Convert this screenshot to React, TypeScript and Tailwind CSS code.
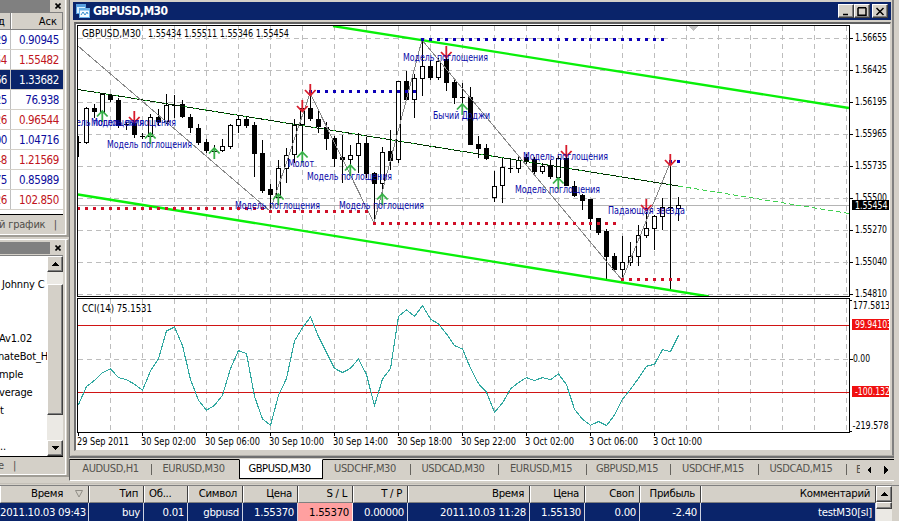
import React from "react";

const UI = "font-['DejaVu_Sans_Condensed','DejaVu_Sans',sans-serif]";
const CHART_FONT = "'DejaVu Sans Condensed','DejaVu Sans',sans-serif";

// [high, low, bodyTop, bodyBottom, kind]; one candle every 8px. f = filled, h = hollow, d = doji
type Candle = [number, number, number, number, "f" | "h" | "d"];
const candles: Candle[] = [
  [136, 157, 142, 143, "d"], [107, 144, 108, 143, "h"], [104, 118, 108, 112, "f"], [93, 118, 94, 113, "h"],
  [94, 102, 95, 100, "f"], [98, 128, 100, 126, "f"], [122, 130, 124, 125, "d"], [120, 138, 123, 135, "f"],
  [133, 139, 136, 137, "d"], [114, 140, 117, 137, "h"], [109, 126, 117, 122, "f"], [94, 124, 105, 122, "h"],
  [95, 118, 105, 106, "d"], [100, 118, 104, 117, "f"], [114, 133, 117, 128, "f"], [124, 145, 128, 143, "f"],
  [139, 153, 142, 151, "f"], [145, 158, 151, 152, "d"], [139, 152, 146, 151, "h"], [124, 149, 125, 147, "h"],
  [115, 133, 119, 126, "h"], [117, 128, 119, 126, "f"], [122, 177, 125, 154, "f"], [140, 193, 153, 191, "f"],
  [184, 210, 189, 195, "f"], [160, 204, 168, 198, "h"], [148, 183, 155, 169, "h"], [119, 163, 125, 155, "h"],
  [103, 152, 108, 125, "h"], [93, 121, 108, 119, "f"], [109, 133, 119, 127, "f"], [122, 150, 127, 139, "f"],
  [136, 167, 138, 159, "f"], [135, 183, 157, 160, "f"], [145, 167, 155, 160, "h"], [133, 173, 143, 156, "h"],
  [137, 178, 143, 174, "f"], [172, 223, 173, 184, "f"], [147, 204, 152, 184, "h"], [130, 170, 151, 161, "f"],
  [81, 163, 81, 160, "h"], [71, 100, 81, 100, "f"], [74, 118, 78, 100, "h"], [41, 96, 66, 79, "h"],
  [60, 80, 66, 78, "f"], [58, 80, 61, 78, "h"], [50, 91, 59, 83, "f"], [80, 104, 82, 98, "f"],
  [83, 108, 97, 98, "d"], [87, 145, 97, 145, "f"], [136, 158, 144, 149, "f"], [144, 160, 148, 159, "f"],
  [171, 202, 186, 198, "h"], [158, 203, 167, 186, "h"], [158, 173, 168, 169, "d"], [157, 173, 160, 169, "h"],
  [154, 164, 157, 161, "f"], [157, 174, 159, 172, "f"], [163, 174, 166, 172, "h"], [160, 179, 165, 177, "f"],
  [156, 180, 158, 178, "h"], [155, 186, 158, 186, "f"], [181, 197, 186, 196, "f"], [194, 210, 195, 201, "f"],
  [199, 230, 199, 219, "f"], [218, 235, 218, 233, "f"], [229, 279, 231, 257, "f"], [253, 271, 256, 270, "f"],
  [236, 280, 262, 270, "h"], [242, 266, 256, 263, "h"], [225, 266, 235, 257, "h"], [212, 238, 228, 236, "h"],
  [215, 250, 216, 229, "h"], [198, 230, 207, 217, "h"], [163, 290, 207, 208, "d"], [197, 221, 205, 209, "h"],
];

// CCI samples in thirds of a pixel below y = 290
const cci = [
  343, 289, 270, 247, 236, 262, 268, 282, 300, 242, 206, 122, 110, 166, 268, 330, 360, 345, 315, 235, 181, 190, 318,
  386, 405, 315, 265, 152, 112, 80, 139, 187, 234, 247, 234, 206, 253, 346, 266, 235, 78, 59, 78, 46, 86, 101, 131,
  166, 176, 234, 280, 306, 366, 338, 296, 277, 262, 271, 262, 268, 251, 283, 357, 387, 405, 394, 406, 374, 327, 297,
  264, 228, 222, 178, 184, 135,
];

const ups: [number, number][] = [[102, 110], [150, 132], [214, 147], [302, 151], [278, 193], [350, 164], [382, 193], [462, 103], [558, 177]];
const downs: [number, number][] = [[134, 123], [302, 112], [310, 96], [446, 58], [566, 157], [646, 211], [670, 166]];
const M = "Модель поглощения";
const labels: [string, number, number, number][] = [
  [M, 59, 126, 85], [M, 91, 126, 85], [M, 107, 148, 85], [M, 235, 209, 85], [M, 339, 209, 85], ["Молот", 288, 167, 26],
  [M, 307, 180, 85], [M, 403, 61, 85], ["Бычий Доджи", 433, 119, 57], [M, 523, 160, 85], [M, 515, 193, 85],
  ["Падающая звезда", 608, 214, 77],
];
const dots: [number, number, number, string][] = [
  [78, 262, 208, "#d01028"], [270, 366, 211, "#d01028"], [374, 614, 223, "#d01028"], [622, 678, 279, "#d01028"],
  [310, 414, 91, "#0c00b8"], [422, 662, 39, "#0c00b8"], [670, 678, 161, "#0c00b8"],
];
const prices: [string, number][] = [
  ["1.56655", 38], ["1.56425", 70], ["1.56195", 102], ["1.55965", 134], ["1.55735", 166], ["1.55500", 198],
  ["1.55270", 230], ["1.55040", 262], ["1.54810", 294],
];
const times: [string, number, number][] = [
  ["29 Sep 2011", 78, 52], ["30 Sep 02:00", 142, 55], ["30 Sep 06:00", 206, 55], ["30 Sep 10:00", 270, 55],
  ["30 Sep 14:00", 334, 55], ["30 Sep 18:00", 398, 55], ["30 Sep 22:00", 462, 55], ["3 Oct 02:00", 526, 49],
  ["3 Oct 06:00", 590, 49], ["3 Oct 10:00", 654, 49],
];
const range = (a: number, b: number, s: number) => Array.from({ length: Math.floor((b - a) / s) + 1 }, (_, i) => a + i * s);

function T({ x, y, w, fill = "#000", children }: { x: number; y: number; w: number; fill?: string; children: string }) {
  return (
    <text x={x} y={y} textLength={w} lengthAdjust="spacingAndGlyphs" fill={fill} fontSize="9.8" fontFamily={CHART_FONT}>
      {children}
    </text>
  );
}

function Chart() {
  return (
    <svg className="block" width="813" height="426" viewBox="76 24 813 426" shapeRendering="crispEdges">
      <defs>
        <clipPath id="price"><rect x="77" y="26" width="772" height="270" /></clipPath>
      </defs>
      <rect x="76" y="24" width="813" height="426" fill="#fff" />
      <g stroke="#bdbdbd" strokeDasharray="5 4" fill="none">
        {range(110, 846, 32).map((x) => <path key={x} d={`M${x + 0.5} 26V296M${x + 0.5} 299V432`} />)}
        {prices.map(([, y]) => <path key={y} d={`M78 ${y + 0.5}H849`} />)}
        <path d="M78 359.5H849" />
      </g>
      <path d="M78 205.5H849" stroke="#b4b4b4" />
      <g clipPath="url(#price)">
        <path d="M78 89.5L678 186" stroke="#20c030" fill="none" />
        <path d="M688 26H698L693 31Z" fill="#c0c0c0" />
        {candles.map(([h, l, t, b, k], i) => {
          const x = 78 + i * 8;
          return (
            <g key={i}>
              <rect x={x} y={h} width="1" height={l - h} fill="#000" />
              {k === "f" && <rect x={x - 2} y={t} width="5" height={b - t} fill="#000" />}
              {k === "h" && <rect x={x - 1.5} y={t + 0.5} width="4" height={b - t - 1} fill="#fff" stroke="#000" />}
              {k === "d" && <rect x={x - 2} y={t} width="5" height="1" fill="#000" />}
            </g>
          );
        })}
        <path d="M333 26L849 108M78 194.5L709 296.5" stroke="#08f008" strokeWidth="2.300" fill="none" shapeRendering="auto" />
        <path d="M78 89.5L678 186" stroke="#002800" strokeDasharray="8 2" fill="none" />
        <path d="M678 186L849 213.5" stroke="#40d050" strokeDasharray="5 3" fill="none" />
        <path d="M78 46L270 211L310 93L374 223L422 40L622 280L670 163" stroke="#888" fill="none" />
        {dots.map(([a, b, y, c]) => range(a, b, 8).map((x) => <rect key={`${x}-${y}`} x={x - 1} y={y - 1} width="3" height="3" fill={c} />))}
        <g stroke="#38b048" strokeWidth="1.8" fill="none" shapeRendering="auto">
          {ups.map(([x, y]) => <path key={x} d={`M${x + 0.3} ${y + 1}v11M${x - 5} ${y + 6.5}l5.3 -5.5l5.3 5.5`} />)}
        </g>
        <g stroke="#d81c2c" strokeWidth="1.8" fill="none" shapeRendering="auto">
          {downs.map(([x, y]) => <path key={x} d={`M${x + 0.3} ${y}v-12M${x - 5} ${y - 6}l5.3 5.5l5.3 -5.5`} />)}
        </g>
        {labels.map(([s, x, y, w], i) => <T key={i} x={x} y={y} w={w} fill="#0808a8">{s}</T>)}
      </g>
      <T x={82} y={37} w={59}>GBPUSD,M30</T>
      <T x={148} y={37} w={141}>1.55434 1.55511 1.55346 1.55454</T>
      <rect x="78" y="325" width="771" height="1" fill="#d01414" />
      <rect x="78" y="392" width="771" height="1" fill="#d01414" />
      <polyline points={cci.map((v, i) => `${78.5 + i * 8},${(290.3 + v / 3).toFixed(1)}`).join(" ")} fill="none" stroke="#30a8a0" strokeWidth="1.1" />
      <T x={82} y={312} w={70}>CCI(14) 75.1531</T>
      <path d="M77.5 25V296.5H849.5V25.5H77M77 298.5H849.5V432.5H77.5V298" stroke="#000" fill="none" />
      {prices.map(([s, y]) => (
        <g key={s}>
          <path d={`M850 ${y + 0.5}h3`} stroke="#000" />
          <T x={855} y={y + 3} w={32}>{s}</T>
        </g>
      ))}
      <path d="M850 300.5h2M850 359.5h3M850 431.5h2" stroke="#000" />
      <rect x="852" y="200" width="37" height="10" fill="#000" />
      <T x={855} y={209} w={32.5} fill="#fff">1.55454</T>
      <T x={853} y={309} w={37}>177.5813</T>
      <rect x="852" y="319" width="37" height="11" fill="#f01010" />
      <T x={855} y={328} w={37} fill="#fff">99.94103</T>
      <T x={853} y={362} w={17}>0.00</T>
      <rect x="852" y="386" width="37" height="11" fill="#f01010" />
      <T x={855} y={395} w={35} fill="#fff">-100.132</T>
      <T x={852.5} y={429} w={36}>-219.578</T>
      {times.map(([s, x, w]) => (
        <g key={s}>
          <path d={`M${x + 0.5} 433v3`} stroke="#000" />
          <T x={x - 1} y={445} w={w}>{s}</T>
        </g>
      ))}
    </svg>
  );
}

const raised = "border border-t-white border-l-white border-r-[#404040] border-b-[#404040] bg-[#d4d0c8] shadow-[inset_-1px_-1px_0_#808080]";

function Arrow({ up = false }: { up?: boolean }) {
  return (
    <svg width="7" height="4" viewBox="0 0 7 4" shapeRendering="crispEdges">
      <path d={up ? "M3 0h1v1h1v1h1v1h1v1H0V3h1V2h1V1h1z" : "M0 0h7v1H6v1H5v1H4v1H3V3H2V2H1V1H0z"} />
    </svg>
  );
}

function PanelTitle() {
  return (
    <div className="flex h-3 shrink-0 items-center">
      <div className="h-full w-[50px] bg-[#808080]" />
      <svg className="ml-[5px]" width="6" height="6" viewBox="0 0 6 6"><path d="M.5 .5l5 5M5.5 .5l-5 5" stroke="#000" strokeWidth="1.6" /></svg>
    </div>
  );
}

const quotes: [string, string, string][] = [
  ["29", "0.90945", "b"], ["54", "1.55482", "r"], ["66", "1.33682", "s"], ["25", "76.938", "b"], ["26", "0.96544", "r"],
  ["00", "1.04716", "b"], ["48", "1.21569", "r"], ["75", "0.85989", "b"], ["26", "102.850", "r"],
];
const tone: Record<string, string> = { b: "text-[#0c0c9c]", r: "text-[#c01420]", s: "bg-[#0a246a] text-white" };

function LeftColumn() {
  return (
    <div className="flex h-[477px] w-[69px] shrink-0 flex-col">
      <div className="flex h-[237px] flex-col border-r-2 border-b-2 border-[#a09d96] pr-px">
        <div className="flex h-full flex-col border-r border-b border-white">
          <PanelTitle />
          <div className="flex h-[203px] w-[63px] flex-col border-t border-b border-t-[#808080] border-b-black bg-white">
            <div className="flex h-[17px] shrink-0 border-b border-[#808080] bg-[#d4d0c8] text-[11px] leading-[18px]">
              <div className="w-[10.5px] border-r border-[#808080]"><span className="-ml-[2px]">д</span></div>
              <div className="flex-1 border-r border-l border-r-[#808080] border-l-white pr-[5px] text-right">Аск</div>
            </div>
            {quotes.map(([a, b, c], i) => (
              <div key={i} className={`flex h-5 shrink-0 border-b border-[#d4d0c8] text-[11.5px] leading-[21px] tracking-[-0.4px] ${tone[c]}`}>
                <div className="flex w-[11px] shrink-0 justify-end overflow-hidden border-r border-[#c0c0c0] pr-[3px]">{a}</div>
                <div className="flex-1 pr-1 text-right">{b}</div>
              </div>
            ))}
          </div>
          <div className="flex justify-between pr-2 text-[11px] leading-[19px] tracking-[-0.2px] whitespace-nowrap text-[#504e4a]">
            <span className="-ml-[1px]">й график</span><span>|</span>
          </div>
        </div>
      </div>
      <div className="mt-[2px] flex h-[238px] flex-col border-t border-r-2 border-b-2 border-t-white border-r-[#a09d96] border-b-[#a09d96] pr-px">
        <div className="flex h-full flex-col border-r border-b border-white pt-[2px]">
          <PanelTitle />
          <div className="mt-px flex h-[202px] w-[63px] border-t border-b border-t-[#808080] border-b-black bg-white text-[11px] tracking-[-0.15px] whitespace-nowrap">
            <div className="w-[47px] overflow-hidden pt-5 leading-[18px]">
              <div className="ml-[2px]">Johnny C</div>
              <div className="h-9" />
              <div className="-ml-px">Av1.02</div>
              <div className="-ml-[2px]">nateBot_H</div>
              <div className="-ml-px">mple</div>
              <div className="-ml-px">verage</div>
              <div>t</div>
              <div className="h-[18px]" />
              <div>..</div>
            </div>
            <div className="flex w-4 flex-col bg-[#ebe9e4]">
              <div className={`flex h-4 items-center justify-center ${raised}`}><Arrow up /></div>
              <div className={`mt-3 h-[131px] ${raised}`} />
              <div className={`mt-auto flex h-4 items-center justify-center ${raised}`}><Arrow /></div>
            </div>
          </div>
          <div className="flex text-[11px] leading-[18px] text-[#504e4a]"><span className="-ml-[2px] w-[15px]">e</span><span>|</span></div>
        </div>
      </div>
    </div>
  );
}

function WindowButton({ d }: { d: string }) {
  return (
    <div className={`flex h-[14px] w-4 items-center justify-center ${raised}`}>
      <svg width="10" height="9" viewBox="0 0 10 9"><path d={d} stroke="#000" strokeWidth="1.5" fill="none" /></svg>
    </div>
  );
}

function ChartWindow() {
  return (
    <div className="flex h-[458px] flex-col border-b-2 border-l border-[#707070]">
      <div className="flex h-full w-[824px] flex-col border-r-2 border-b border-l-2 border-r-[#808080] border-b-[#b0ada6] border-l-[#d4d0c8] pt-[2px] pl-px">
        <div className="flex h-[18px] w-[818px] shrink-0 items-center bg-[#0a246a] pr-[3px] pl-[3px] text-[12px] font-bold tracking-[-0.6px] text-white">
          <svg className="mr-[3px]" width="14" height="14" viewBox="0 0 14 14">
            <rect x=".5" y=".5" width="9" height="9" fill="#d8f0ff" stroke="#58a0e0" />
            <path d="M1 2h8" stroke="#58a0e0" strokeWidth="2" />
            <rect x="3.5" y="4.500" width="10" height="9" fill="#f4fcff" stroke="#68b0e8" />
            <path d="M4 5.500h9" stroke="#68b0e8" strokeWidth="2" />
            <path d="M5 11l2-3 2 3 2-3 1 2" stroke="#3890d0" fill="none" />
          </svg>
          <span className="flex-1">GBPUSD,M30</span>
          <WindowButton d="M2 7.500h5" />
          <WindowButton d="M1 .8h8M1 .8v7.400h8V.8" />
          <div className="w-[2px]" />
          <WindowButton d="M1.500 1l7 7M8.500 1l-7 7" />
        </div>
        <div className="mt-[2px] ml-px w-[817px] border-t-2 border-l-2 border-t-[#606060] border-l-[#707070] border-r border-b border-r-[#d4d0c8] border-b-[#d4d0c8] bg-white">
          <Chart />
        </div>
      </div>
    </div>
  );
}

const tabItems: [string, string, boolean][] = [
  ["AUDUSD,H1", "w-[82px]", true], ["EURUSD,M30", "w-[87px] pr-1", false], ["GBPUSD,M30", "w-[84px] pr-[3px]", false],
  ["USDCHF,M30", "w-[88px]", true], ["USDCAD,M30", "w-[88px]", true], ["EURUSD,M15", "w-[88px]", true],
  ["GBPUSD,M15", "w-[84px]", true], ["USDCHF,M15", "w-[88px]", true], ["USDCAD,M15", "w-[88px]", true],
];

function ChartTabs() {
  return (
    <div className="flex h-[22px] items-start border-b border-l border-b-white border-l-[#606060] text-[11px] tracking-[-0.36px] whitespace-nowrap text-[#55534e]">
      <div className="flex h-[20px] flex-1 border-t border-black">
        {tabItems.map(([name, w, sep], i) => (
          <div
            key={name}
            className={`flex shrink-0 items-center justify-center ${w} ${i === 2 ? "-mt-px border border-t-white border-black bg-white text-black" : "h-[19px]"}`}
          >
            <span className={`flex-1 text-center ${i > 2 ? "pr-[3px]" : ""}`}>{name}</span>
            {sep && <span className="h-[11px] w-px bg-[#66645f]" />}
          </div>
        ))}
        <span className="ml-[9px] w-[4px] overflow-hidden leading-[19px]">E</span>
        <svg className="mt-[6px] ml-[6px]" width="24" height="8" viewBox="0 0 24 8" shapeRendering="crispEdges">
          <path d="M5 0v8L1 4zM18 0v8l4-4z" />
        </svg>
      </div>
    </div>
  );
}

const cols: [string, string, string, string][] = [
  ["Время", "2011.10.03 09:43", "w-[89px]", "sort"], ["Тип", "buy", "w-[55px]", ""], ["Об...", "0.01", "w-[44px]", "left"],
  ["Символ", "gbpusd", "w-[55px]", ""], ["Цена", "1.55370", "w-[55px]", ""], ["S / L", "1.55370", "w-[55px]", "sl"],
  ["T / P", "0.00000", "w-[55px]", ""], ["Время", "2011.10.03 11:28", "w-[122px]", ""], ["Цена", "1.55130", "w-[55px]", ""],
  ["Своп", "0.00", "w-[55px]", ""], ["Прибыль", "-2.40", "w-[61px]", ""], ["Комментарий", "testM30[sl]", "w-[175px]", ""],
];

function Terminal() {
  return (
    <div className="flex h-[37px] border-t border-[#808080] text-[11.3px] tracking-[-0.3px] whitespace-nowrap">
      {cols.map(([h, v, w, k], i) => (
        <div key={i} className={`shrink-0 ${w}`}>
          <div className="flex h-[17px] items-center justify-end border-r border-b border-l border-r-[#404040] border-b-[#808080] border-l-white pr-[5px] pl-1">
            <span className={k === "left" ? "mr-auto" : ""}>{h}</span>
            {k === "sort" && <svg className="ml-3" width="8" height="8" viewBox="0 0 8 8"><path d="M.5 .5h7L4 7z" fill="none" stroke="#908d86" /></svg>}
          </div>
          <div className={`h-[19px] border-r border-white/80 pr-[3px] text-right leading-[20px] ${k === "sl" ? "bg-[#ffa0a0] text-black" : "bg-[#0a246a] text-white"}`}>{v}</div>
        </div>
      ))}
      <div className="flex w-4 flex-col bg-[#ebe9e4]">
        <div className={`flex h-4 items-center justify-center ${raised}`}><Arrow up /></div>
        <div className={`h-[7px] ${raised}`} />
      </div>
    </div>
  );
}

export default function App() {
  return (
    <div className={`flex h-[521px] w-[899px] flex-col overflow-hidden bg-[#d4d0c8] text-black ${UI}`}>
      <div className="flex h-[481px] shrink-0">
        <LeftColumn />
        <div className="flex min-w-0 flex-1 flex-col pr-[5px]">
          <ChartWindow />
          <div className="h-px" />
          <ChartTabs />
        </div>
      </div>
      <div className="mt-[2px] mb-px h-px w-[892px] shrink-0 bg-[#c4c0b8]" />
      <Terminal />
    </div>
  );
}
